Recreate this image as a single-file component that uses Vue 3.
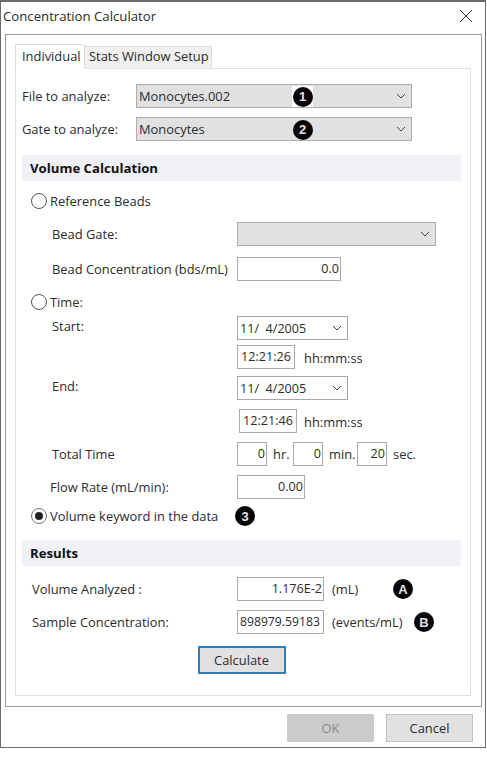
<script setup>
const badges = { one: '1', two: '2', three: '3', a: 'A', b: 'B' }
</script>

<template>
  <div class="window">
    <header class="titlebar">
      <span class="title">Concentration Calculator</span>
      <svg class="close" width="14" height="14" viewBox="0 0 14 14"><path d="M1 1 L13 13 M13 1 L1 13" stroke="#333" stroke-width="1" fill="none" /></svg>
    </header>

    <div class="group">
      <div class="tabs">
        <div class="tab active">Individual</div>
        <div class="tab">Stats Window Setup</div>
      </div>

      <div class="panel">
        <div class="row file-row">
          <label class="lbl-file">File to analyze:</label>
          <div class="select wide">
            <span>Monocytes.002</span>
            <span class="badge-wrap"><span class="badge">{{ badges.one }}</span></span>
            <svg class="chev" width="10" height="6" viewBox="0 0 10 6"><path d="M1 1 L5 5 L9 1" stroke="#444" fill="none" /></svg>
          </div>
        </div>
        <div class="row gate-row">
          <label class="lbl-file">Gate to analyze:</label>
          <div class="select wide">
            <span>Monocytes</span>
            <span class="badge-wrap clear"><span class="badge">{{ badges.two }}</span></span>
            <svg class="chev" width="10" height="6" viewBox="0 0 10 6"><path d="M1 1 L5 5 L9 1" stroke="#444" fill="none" /></svg>
          </div>
        </div>

        <div class="section vol-head">Volume Calculation</div>

        <div class="radio-row rb-row"><span class="radio"></span>Reference Beads</div>

        <div class="form-row bg-row">
          <label class="lbl">Bead Gate:</label>
          <div class="select bead">
            <svg class="chev" width="10" height="6" viewBox="0 0 10 6"><path d="M1 1 L5 5 L9 1" stroke="#444" fill="none" /></svg>
          </div>
        </div>
        <div class="form-row bc-row">
          <label class="lbl">Bead Concentration (bds/mL)</label>
          <div class="input w103">0.0</div>
        </div>

        <div class="radio-row time-row"><span class="radio"></span>Time:</div>

        <div class="form-row start-row top">
          <label class="lbl">Start:</label>
          <div class="date">
            <span>11/&nbsp; 4/2005</span>
            <svg class="chev" width="10" height="6" viewBox="0 0 10 6"><path d="M1 1 L5 5 L9 1" stroke="#444" fill="none" /></svg>
          </div>
        </div>
        <div class="form-row stime-row">
          <span class="lbl"></span>
          <div class="input time">12:21:26</div>
          <span class="unit hms">hh:mm:ss</span>
        </div>

        <div class="form-row end-row top">
          <label class="lbl">End:</label>
          <div class="date">
            <span>11/&nbsp; 4/2005</span>
            <svg class="chev" width="10" height="6" viewBox="0 0 10 6"><path d="M1 1 L5 5 L9 1" stroke="#444" fill="none" /></svg>
          </div>
        </div>
        <div class="form-row etime-row">
          <span class="lbl"></span>
          <div class="input time shifted">12:21:46</div>
          <span class="unit hms-end">hh:mm:ss</span>
        </div>

        <div class="form-row total-row">
          <label class="lbl">Total Time</label>
          <div class="input w30">0</div><span class="unit hr">hr.</span>
          <div class="input w29">0</div><span class="unit min">min.</span>
          <div class="input w29b">20</div><span class="unit sec">sec.</span>
        </div>

        <div class="form-row flow-row">
          <label class="lbl flow">Flow Rate (mL/min):</label>
          <div class="input w68">0.00</div>
        </div>

        <div class="radio-row kw-row">
          <span class="radio on"><i></i></span>Volume keyword in the data
          <span class="badge third">{{ badges.three }}</span>
        </div>

        <div class="section res-head">Results</div>

        <div class="form-row va-row">
          <label class="lbl res">Volume Analyzed :</label>
          <div class="input w87">1.176E-2</div>
          <span class="unit ml">(mL)</span>
          <span class="badge ba">{{ badges.a }}</span>
        </div>
        <div class="form-row sc-row">
          <label class="lbl res">Sample Concentration:</label>
          <div class="input w87 num">898979.59183</div>
          <span class="unit ml">(events/mL)</span>
          <span class="badge bb">{{ badges.b }}</span>
        </div>

        <div class="calc-wrap"><button class="calc">Calculate</button></div>
      </div>
    </div>

    <footer class="actions">
      <button class="btn disabled">OK</button>
      <button class="btn">Cancel</button>
    </footer>
  </div>
</template>

<style scoped>
.window {
  box-sizing: border-box;
  width: 486px;
  height: 748px;
  border: 1px solid #6f6a68;
  border-width: 2px 1px 1px 1px;
  background: #fff;
  font-family: "Open Sans", "Noto Sans", sans-serif;
  font-size: 12.9px;
  color: #2b2b2b;
  display: flex;
  flex-direction: column;
}
.titlebar {
  height: 32px;
  flex: none;
  display: flex;
  align-items: center;
  justify-content: space-between;
  padding: 0 12px 4px 2px;
  box-sizing: border-box;
}
.title { font-size: 13.2px; }
.close { display: block; }
.group {
  box-sizing: border-box;
  margin: 0 4px;
  width: 477px;
  height: 673px;
  border: 1px solid #9a9a9a;
  padding: 9px 9px 0 9px;
}
.tabs { display: flex; align-items: flex-end; height: 24px; }
.tab {
  box-sizing: border-box;
  height: 22px;
  padding: 0 3px 3px 4px;
  display: flex;
  align-items: center;
  background: #f0f0f0;
  border: 1px solid #dcdcdc;
  border-bottom: 0;
  border-left: 0;
  width: 127px;
  white-space: nowrap;
}
.tab.active {
  height: 25px;
  width: 70px;
  background: #fff;
  padding-left: 6px;
  border-left: 1px solid #dcdcdc;
  margin-bottom: -1px;
  position: relative;
  z-index: 1;
  padding-bottom: 2px;
}
.panel {
  box-sizing: border-box;
  width: 456px;
  height: 628px;
  border: 1px solid #dfdfdf;
  padding: 0 8px 0 6px;
  display: flex;
  flex-direction: column;
}
.row { display: flex; align-items: center; height: 24px; }
.file-row { margin-top: 15px; }
.gate-row { margin-top: 9px; }
.lbl-file { width: 114px; flex: none; }
.select {
  box-sizing: border-box;
  height: 24px;
  background: #e1e1e1;
  border: 1px solid #adadad;
  display: flex;
  align-items: center;
  padding-left: 2px;
  position: relative;
}
.select.wide { width: 276px; }
.select.bead { width: 199px; }
.chev { position: absolute; right: 5px; top: 8px; }
.badge-wrap {
  position: absolute;
  left: 155px;
  top: 1px;
  width: 21px;
  height: 21px;
  background: #fff;
  display: flex;
  align-items: center;
  justify-content: center;
}
.badge-wrap.clear { background: transparent; }
.badge {
  width: 20px;
  height: 20px;
  border-radius: 50%;
  background: #050505;
  color: #e4e4e4;
  font-family: "Liberation Sans", sans-serif;
  font-weight: 700;
  font-size: 13px;
  display: inline-flex;
  align-items: center;
  justify-content: center;
  flex: none;
}
.section {
  box-sizing: border-box;
  height: 26px;
  background: #f0f2f7;
  width: 439px;
  padding-left: 8px;
  font-weight: 700;
  font-size: 13.2px;
  color: #111;
  display: flex;
  align-items: center;
}
.vol-head { margin-top: 14px; }
.res-head { margin-top: 15px; }
.radio-row { display: flex; align-items: center; height: 18px; padding-left: 9px; position: relative; }
.radio {
  box-sizing: border-box;
  width: 16px;
  height: 16px;
  border: 1px solid #555;
  border-radius: 50%;
  margin-right: 3px;
  display: flex;
  align-items: center;
  justify-content: center;
  background: #fff;
}
.radio.on { border-color: #777; }
.radio i { width: 8px; height: 8px; border-radius: 50%; background: #222; display: block; }
.rb-row { margin-top: 11px; }
.form-row { display: flex; align-items: center; height: 24px; position: relative; }
.lbl { width: 215px; flex: none; padding-left: 30px; box-sizing: border-box; }
.lbl.flow { padding-left: 28px; }
.lbl.res { padding-left: 10px; }
.form-row.top .lbl { align-self: flex-start; padding-top: 1px; }
.bg-row { margin-top: 12px; }
.bc-row { margin-top: 11px; }
.time-row { margin-top: 12px; }
.start-row { margin-top: 5px; }
.stime-row { margin-top: 5px; }
.end-row { margin-top: 7px; }
.etime-row { margin-top: 9px; }
.total-row { margin-top: 9px; }
.flow-row { margin-top: 9px; }
.kw-row { margin-top: 8px; }
.va-row { margin-top: 11px; }
.sc-row { margin-top: 9px; }
.input {
  box-sizing: border-box;
  height: 24px;
  border: 1px solid #a8a8a8;
  background: #fff;
  text-align: right;
  padding: 0 1px 2px 0;
  line-height: 21px;
  flex: none;
  white-space: nowrap;
  font-size: 12.6px;
}
.w103 { width: 104px; }
.w68 { width: 68px; }
.w87 { width: 87px; }
.w30 { width: 30px; }
.w29 { width: 30px; }
.w29b { width: 30px; }
.num { text-align: left; padding-left: 2px; padding-right: 0; overflow: hidden; font-size: 12.2px; }
.time { width: 58px; text-align: center; padding: 0; }
.time.shifted { margin-left: 2px; }
.date {
  box-sizing: border-box;
  width: 111px;
  height: 24px;
  border: 1px solid #a8a8a8;
  display: flex;
  align-items: center;
  padding-left: 2px;
  position: relative;
  background: #fff;
  font-size: 12.6px;
}
.unit { flex: none; }
.hms { margin-left: 9px; padding-top: 2px; }
.hms-end { margin-left: 7px; padding-top: 2px; }
.hr { margin-left: 6px; width: 20px; }
.min { margin-left: 6px; width: 28px; }
.sec { margin-left: 6px; }
.ml { margin-left: 8px; }
.third { position: absolute; left: 213px; top: -1px; }
.ba { position: absolute; left: 371px; top: 2px; }
.bb { position: absolute; left: 392px; top: 2px; }
.calc-wrap { display: flex; justify-content: center; margin-top: 12px; padding-right: 0; width: 439px; }
.calc {
  box-sizing: border-box;
  width: 88px;
  height: 28px;
  background: #e1e1e1;
  border: 2px solid #2f7fb8;
  font: inherit;
  color: inherit;
  padding: 0;
}
.actions {
  display: flex;
  justify-content: flex-end;
  gap: 12px;
  padding: 7px 12px 0 0;
}
.btn {
  box-sizing: border-box;
  width: 87px;
  height: 28px;
  background: #e1e1e1;
  border: 1px solid #c4c4c4;
  font: inherit;
  color: inherit;
  padding: 0;
}
.btn.disabled { background: #cccccc; color: #8a8a8a; border-color: #cccccc; }
</style>
